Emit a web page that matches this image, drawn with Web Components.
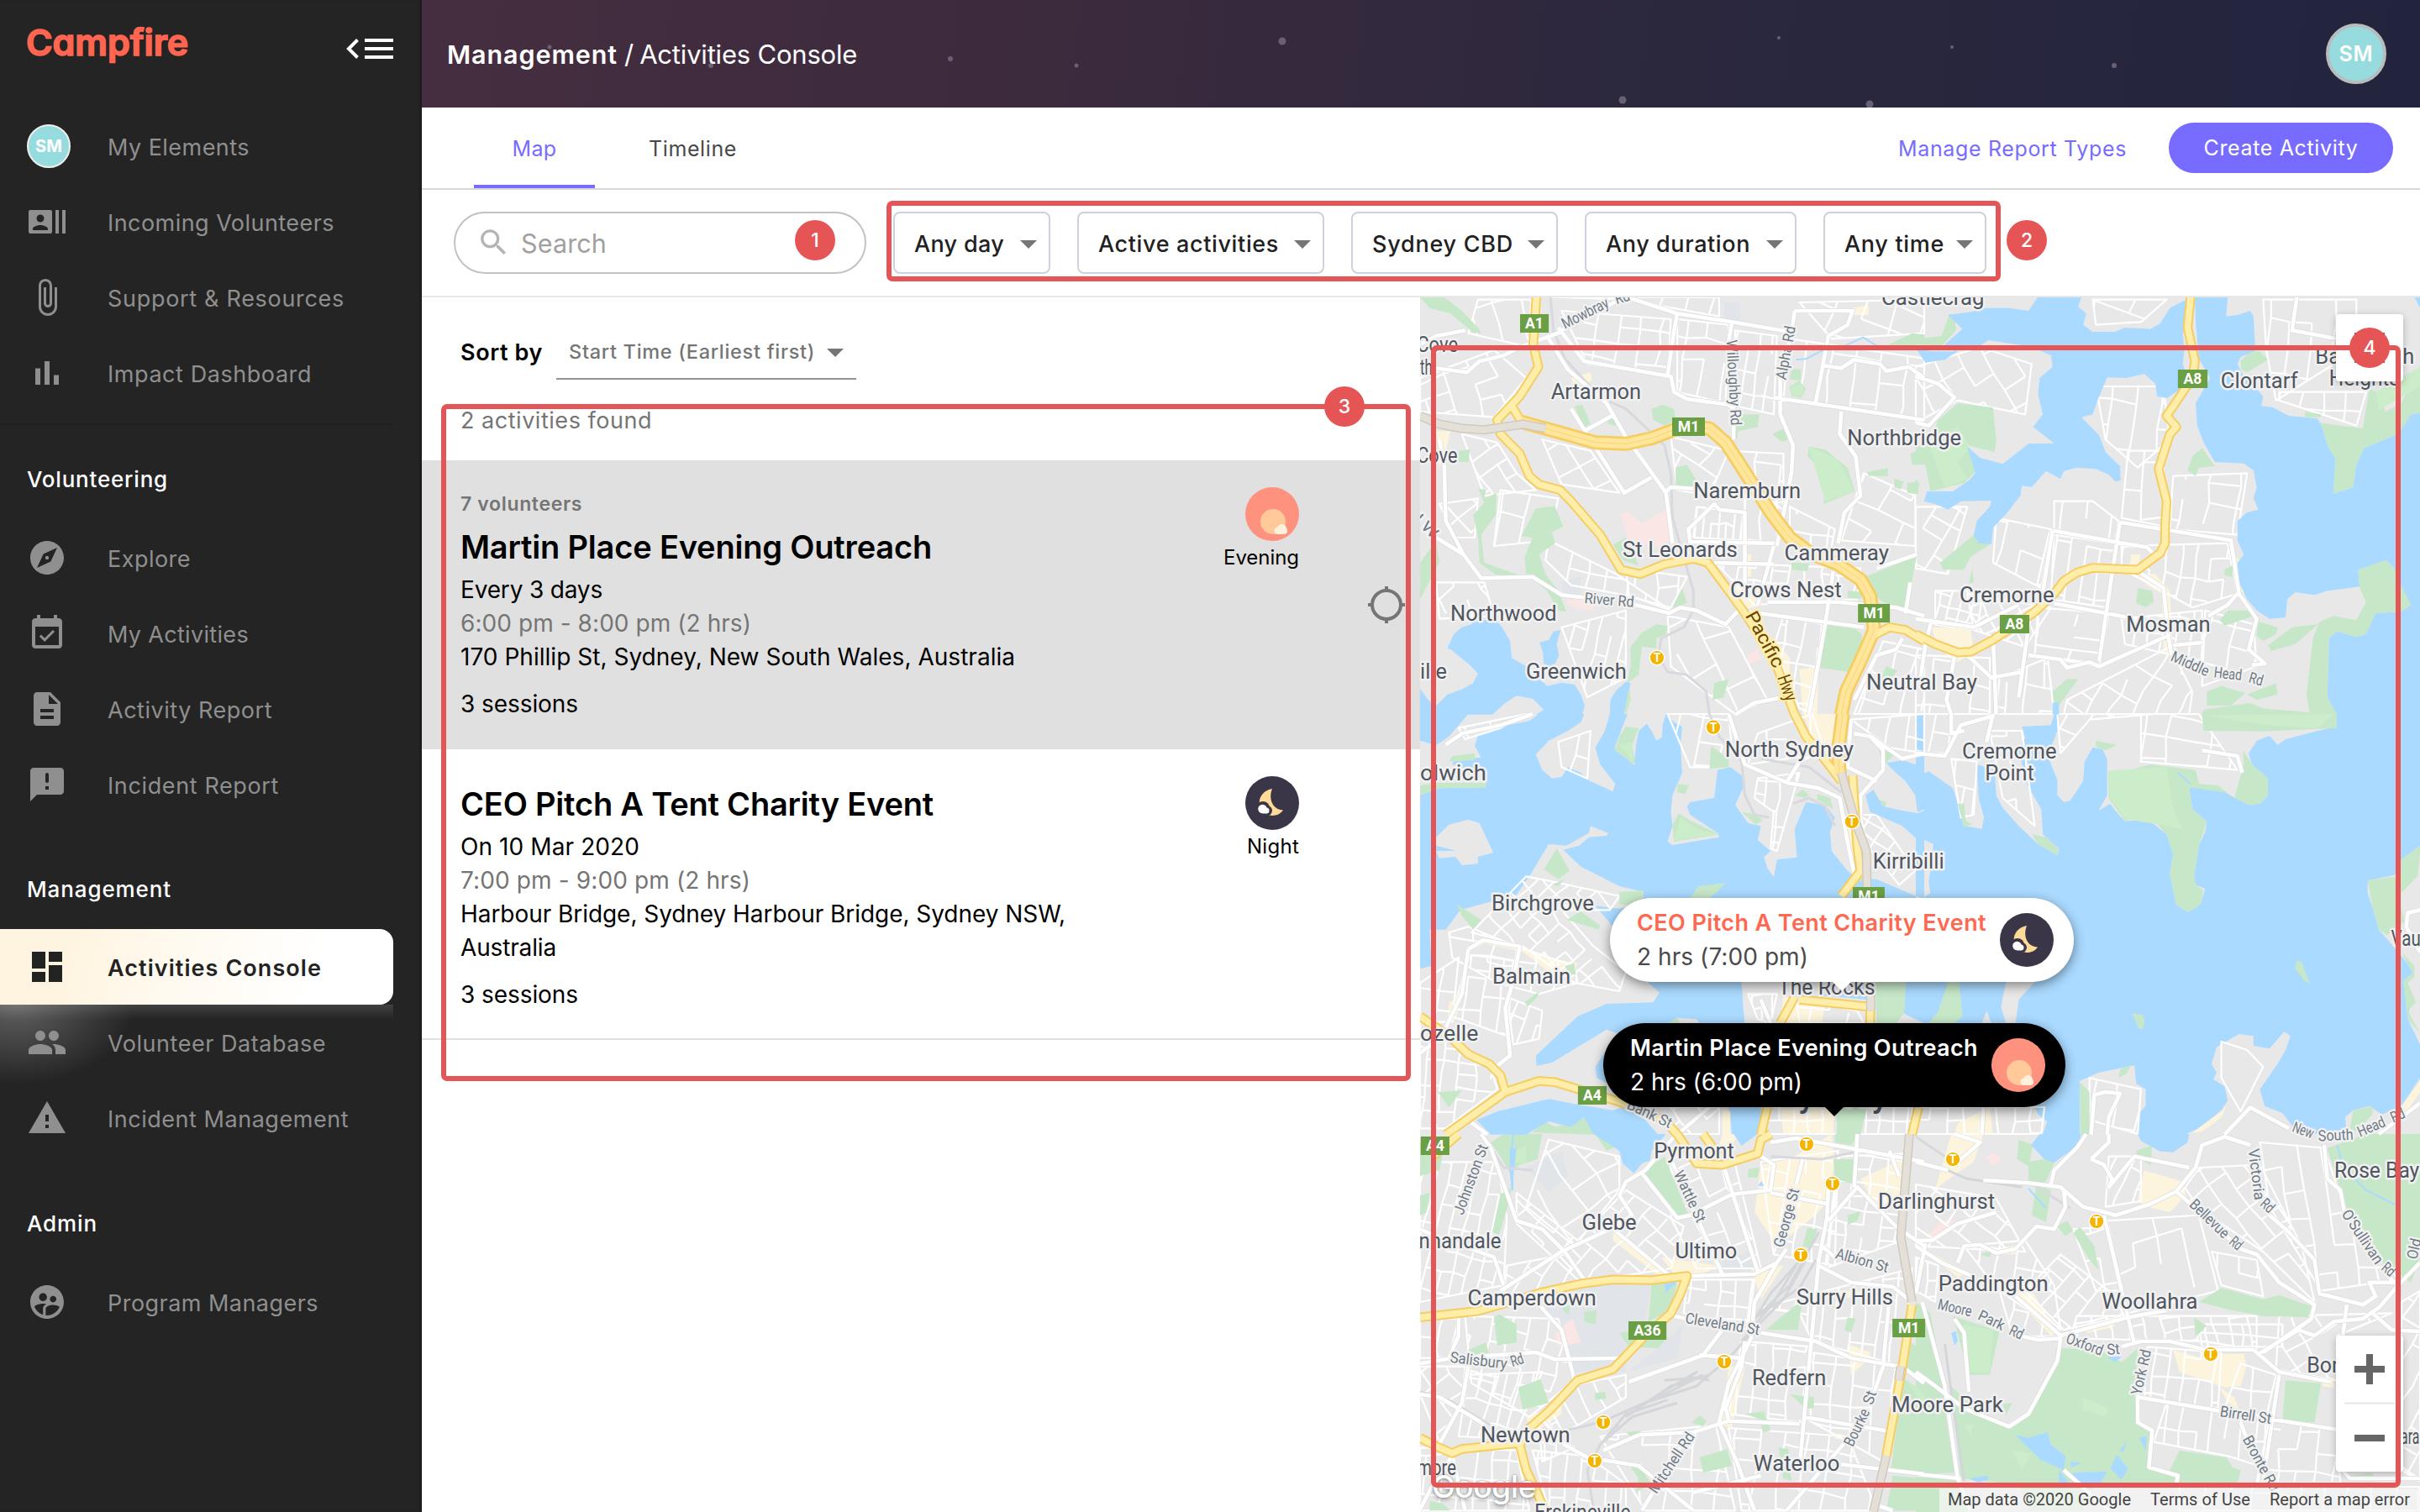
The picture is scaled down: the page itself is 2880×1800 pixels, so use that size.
<!DOCTYPE html>
<html lang="en">
<head>
<meta charset="utf-8">
<title>Campfire – Activities Console</title>
<style>
html,body{margin:0;padding:0}
body{width:2880px;height:1800px;overflow:hidden;background:#fff;font-family:Inter,"Liberation Sans",sans-serif;color:#000}
</style>
</head>
<body>
<campfire-app></campfire-app>
<script>
const define=(name,html,setup)=>customElements.define(name,class extends HTMLElement{
  connectedCallback(){
    if(this.shadowRoot)return;
    const r=this.attachShadow({mode:'open'});
    r.innerHTML=typeof html==='function'?html(this):html;
    if(setup)setup(this,r);
  }
});

/* Text run that spreads its letters over a set width */
define('fit-text','<style>:host{display:inline-block;white-space:nowrap;flex:none}</style><slot></slot>',(el)=>{
  queueMicrotask(()=>{
    const w=+el.getAttribute('w')+2,n=el.textContent.length;
    const now=el.getBoundingClientRect().width;
    if(now&&n)el.style.letterSpacing=((w-now)/n).toFixed(3)+'px';
    el.style.width=w+'px';
  });
});

/* ---------- icons ---------- */
const ICONS={
 actors:'M21 5v14h2V5h-2zm-4 14h2V5h-2v14zM14 5H2c-.55 0-1 .45-1 1v12c0 .55.45 1 1 1h12c.55 0 1-.45 1-1V6c0-.55-.45-1-1-1zM8 7.75c1.24 0 2.25 1.01 2.25 2.25S9.24 12.25 8 12.25 5.75 11.24 5.75 10 6.76 7.75 8 7.75zM12.5 17h-9v-.75c0-1.5 3-2.25 4.5-2.25s4.5.75 4.5 2.25V17z',
 clip:'M16.5 6v11.5c0 2.21-1.79 4-4 4s-4-1.79-4-4V5c0-1.38 1.12-2.5 2.5-2.5s2.5 1.12 2.5 2.5v10.5c0 .55-.45 1-1 1s-1-.45-1-1V6H10v9.5c0 1.38 1.12 2.5 2.5 2.5s2.5-1.12 2.5-2.5V5c0-2.21-1.79-4-4-4S7 2.79 7 5v12.5c0 3.04 2.46 5.5 5.5 5.5s5.5-2.46 5.5-5.5V6h-1.5z',
 bars:'M5 9.2h3V19H5zM10.5 5h3v14h-3zM16 13.2h3V19h-3z',
 explore:'M12 10.9c-.61 0-1.1.49-1.1 1.1s.49 1.1 1.1 1.1c.61 0 1.1-.49 1.1-1.1s-.49-1.1-1.1-1.1zM12 2C6.48 2 2 6.48 2 12s4.48 10 10 10 10-4.48 10-10S17.52 2 12 2zm2.19 12.19L6 18l3.81-8.19L18 6l-3.81 8.19z',
 event:'M19 3h-1V1h-2v2H8V1H6v2H5c-1.11 0-1.99.9-1.99 2L3 19c0 1.1.89 2 2 2h14c1.1 0 2-.9 2-2V5c0-1.1-.9-2-2-2zm0 16H5V8h14v11zM16.53 11.06L15.47 10l-4.88 4.88-2.12-2.12-1.06 1.06L10.59 17l5.94-5.94z',
 doc:'M14 2H6c-1.1 0-1.99.9-1.99 2L4 20c0 1.1.89 2 1.99 2H18c1.1 0 2-.9 2-2V8l-6-6zm2 16H8v-2h8v2zm0-4H8v-2h8v2zm-3-5V3.5L18.5 9H13z',
 announce:'M20 2H4c-1.1 0-1.99.9-1.99 2L2 22l4-4h14c1.1 0 2-.9 2-2V4c0-1.1-.9-2-2-2zm-7 8q0 1-1 1t-1-1V6q0-1 1-1t1 1zm0 5h-2v-2h2v2z',
 dash:'M3 13h8V3H3v10zm0 8h8v-6H3v6zm10 0h8V11h-8v10zm0-18v6h8V3h-8z',
 people:'M16 11c1.66 0 2.99-1.34 2.99-3S17.66 5 16 5c-1.66 0-3 1.34-3 3s1.34 3 3 3zm-8 0c1.66 0 2.99-1.34 2.99-3S9.66 5 8 5C6.34 5 5 6.34 5 8s1.34 3 3 3zm0 2c-2.33 0-7 1.17-7 3.5V19h14v-2.5c0-2.33-4.67-3.5-7-3.5zm8 0c-.29 0-.62.02-.97.05 1.16.84 1.97 1.97 1.97 3.45V19h6v-2.5c0-2.33-4.67-3.5-7-3.5z',
 warn:'M1 21h22L12 2 1 21zm12-3h-2v-2h2v2zm0-4h-2v-4h2v4z',
 managers:'M11.99 2c-5.52 0-10 4.48-10 10s4.48 10 10 10 10-4.48 10-10-4.48-10-10-10zm3.61 6.34c1.07 0 1.93.86 1.93 1.93 0 1.07-.86 1.93-1.93 1.93-1.07 0-1.93-.86-1.93-1.93-.01-1.07.86-1.93 1.93-1.93zm-6-1.58c1.3 0 2.36 1.06 2.36 2.36 0 1.3-1.06 2.36-2.36 2.36s-2.36-1.06-2.36-2.36c0-1.31 1.05-2.36 2.36-2.36zm0 9.13v3.75c-2.4-.75-4.3-2.6-5.14-4.96 1.05-1.12 3.67-1.69 5.14-1.69.53 0 1.2.08 1.9.22-1.64.87-1.9 2.02-1.9 2.68zM11.99 20c-.27 0-.53-.01-.79-.04v-4.07c0-1.42 2.94-2.13 4.4-2.13 1.07 0 2.92.39 3.84 1.15-1.17 2.97-4.06 5.09-7.45 5.09z',
 search:'M15.5 14h-.79l-.28-.27C15.41 12.59 16 11.11 16 9.5 16 5.91 13.09 3 9.5 3S3 5.91 3 9.5 5.91 16 9.5 16c1.61 0 3.09-.59 4.23-1.57l.27.28v.79l5 4.99L20.49 19l-4.99-5zm-6 0C7.01 14 5 11.99 5 9.5S7.01 5 9.5 5 14 7.01 14 9.5 11.99 14 9.5 14z'
};
define('mat-icon',el=>`<style>:host{display:block;flex:none}svg{display:block}</style><svg width="${el.getAttribute('size')||48}" height="${el.getAttribute('size')||48}" viewBox="0 0 24 24" fill="currentColor"><path d="${ICONS[el.getAttribute('name')]}"/></svg>`);

define('time-icon',el=>`<style>:host{display:block;flex:none;width:64px;height:64px}svg{display:block}</style>`+
 (el.getAttribute('kind')==='evening'
 ?`<svg width="64" height="64" viewBox="0 0 64 64"><circle cx="32" cy="32" r="32" fill="#ff927f"/><circle cx="33" cy="41" r="15" fill="#ffc99a"/><g fill="#fff0dc"><circle cx="38.500" cy="52" r="4"/><circle cx="43.500" cy="49.500" r="5.600"/><circle cx="46" cy="52" r="4"/><rect x="38" y="50" width="8.500" height="6"/></g></svg>`
 :`<svg width="64" height="64" viewBox="0 0 64 64"><circle cx="32" cy="32" r="32" fill="#3a3547"/><path d="M32 15C20 17 14 28 18 37C22 48 38 51 45 40.500C33 40 27 28 32 15Z" fill="#ffd998"/><g fill="#3a3547"><circle cx="21" cy="38" r="8"/><circle cx="26" cy="41" r="6"/></g><g fill="#fff"><circle cx="20.500" cy="39" r="5.300"/><circle cx="25" cy="41" r="3.500"/><rect x="20" y="39" width="5" height="5.400"/></g></svg>`));

define('user-avatar',el=>{const s=+el.getAttribute('size');return `<style>:host{display:flex;flex:none;box-sizing:border-box;width:${s}px;height:${s}px;border:${s>60?4:2}px solid ${s>60?'#b8bcbe':'#f0efec'};border-radius:50%;background:#96dcde;color:#fff;font-weight:${s>60?600:700};font-size:${s>60?25:20}px;align-items:center;justify-content:center}</style><fit-text w="${s>60?39:30}">SM</fit-text>`});

/* ---------- sidebar ---------- */
define('nav-item',`<style>
:host{display:flex;align-items:center;height:90px;width:468px;box-sizing:border-box;padding-left:32px;color:#8f8f8f;font-size:27px;line-height:40px;position:relative}
.i{width:96px;flex:none;display:flex}
.l{padding-top:3px}
:host([active]){background:linear-gradient(105deg,#fff4e0 0%,#fff4e0 18%,#fffaf0 45%,#fff 80%);color:#232323;font-weight:600;border-radius:0 16px 16px 0}
</style><div class="i"><slot name="icon"></slot></div><div class="l"><slot></slot></div>`);
define('nav-group',`<style>:host{display:block}h2{margin:0;box-sizing:border-box;padding-left:32px;font-size:26px;line-height:40px;font-weight:500;color:#fff}</style><h2><slot name="title"></slot></h2><slot></slot>`,(el,r)=>{
  const h=r.querySelector('h2');h.style.height=el.getAttribute('head')+'px';h.style.paddingTop=(el.getAttribute('head')/2-3.5)+'px';
  if(!el.hasAttribute('head'))h.style.display='none';
});
define('side-bar',`<style>
:host{display:block;width:502px;height:1800px;flex:none;background:#242424;box-shadow:inset -3px 0 3px -1px #1a1a1a}
.brand{display:flex;justify-content:space-between;box-sizing:border-box;height:129px;padding:24px 34px 0 31px}
.logo{color:#ff6550;font-size:43px;line-height:52px;font-weight:600;font-feature-settings:"cv11";-webkit-text-stroke:1.6px #ff6550;stroke-linejoin:round}
.brand svg{margin-top:20px}
.line{height:2px;width:468px;margin:15px 0 -17px;background:#202020}
.glow{height:100px;width:468px;margin-bottom:-100px;background:radial-gradient(ellipse 140px 95px at 20px 0,rgba(255,255,255,.28),transparent),linear-gradient(rgba(255,255,255,.13),rgba(255,255,255,0) 18px)}
</style>
<div class="brand"><fit-text class="logo" w="191">Campfire</fit-text>
<svg width="56" height="28" viewBox="0 0 56 28" fill="none" stroke="#fff" stroke-width="4"><path d="M13.500 3.500L3 14l10.500 10.500M22 4h34M22 14h34M22 24h34"/></svg></div>
<nav-group>
<nav-item><user-avatar slot="icon" size="52"></user-avatar><fit-text w="167">My Elements</fit-text></nav-item>
<nav-item><mat-icon slot="icon" name="actors"></mat-icon><fit-text w="268">Incoming Volunteers</fit-text></nav-item>
<nav-item><mat-icon slot="icon" name="clip"></mat-icon><fit-text w="280">Support &amp; Resources</fit-text></nav-item>
<nav-item><mat-icon slot="icon" name="bars"></mat-icon><fit-text w="241">Impact Dashboard</fit-text></nav-item>
</nav-group>
<div class="line"></div>
<nav-group head="130"><fit-text slot="title" w="166">Volunteering</fit-text>
<nav-item><mat-icon slot="icon" name="explore"></mat-icon><fit-text w="97">Explore</fit-text></nav-item>
<nav-item><mat-icon slot="icon" name="event"></mat-icon><fit-text w="166">My Activities</fit-text></nav-item>
<nav-item><mat-icon slot="icon" name="doc"></mat-icon><fit-text w="194">Activity Report</fit-text></nav-item>
<nav-item><mat-icon slot="icon" name="announce"></mat-icon><fit-text w="202">Incident Report</fit-text></nav-item>
</nav-group>
<nav-group head="127"><fit-text slot="title" w="170">Management</fit-text>
<nav-item active><mat-icon slot="icon" name="dash"></mat-icon><fit-text w="253">Activities Console</fit-text></nav-item>
<div class="glow"></div>
<nav-item><mat-icon slot="icon" name="people"></mat-icon><fit-text w="258">Volunteer Database</fit-text></nav-item>
<nav-item><mat-icon slot="icon" name="warn"></mat-icon><fit-text w="285">Incident Management</fit-text></nav-item>
</nav-group>
<nav-group head="129"><fit-text slot="title" w="82">Admin</fit-text>
<nav-item><mat-icon slot="icon" name="managers"></mat-icon><fit-text w="249">Program Managers</fit-text></nav-item>
</nav-group>`);

/* ---------- header and tabs ---------- */
const STARS=[[152,56,2.5],[344,78,3],[629,70,3],[779,78,2.5],[1024,49,4.5],[1615,45,2],[1821,56,2],[2014,78,3],[1429,119,4.5],[1723,124,4.5]];
define('top-header',`<style>
:host{display:grid;height:128px;background:linear-gradient(97deg,#452e40 0%,#3c2a3d 32%,#2b283e 62%,#22243e 100%);color:#fff}
svg,.row{grid-area:1/1}
.row{display:flex;align-items:center;padding:0 40px 0 30px;font-size:31px;line-height:40px}
.x{padding-top:1px;display:flex}
b{font-weight:600;font-size:30.500px}.sep{padding:0 7px 0 8px}
user-avatar{margin-left:auto}
</style><svg width="2378" height="128" fill="#6a6073">${STARS.map(s=>`<circle cx="${s[0]}" cy="${s[1]}" r="${s[2]}"/>`).join('')}</svg>
<div class="row"><div class="x"><b><fit-text w="201">Management</fit-text></b><span class="sep">/</span><fit-text w="257">Activities Console</fit-text></div><user-avatar size="72"></user-avatar></div>`);

define('tab-bar',`<style>
:host{display:flex;box-sizing:border-box;height:98px;border-bottom:2px solid #d8d8d8;align-items:stretch;padding:0 32px 0 62px;font-size:25px;line-height:40px;color:#484848}
.t{box-sizing:border-box;height:96px;padding:29px 0 22px;text-align:center}
.on{width:144px;border-bottom:4px solid #776cff;color:#776cff;padding-bottom:18px}
.t2{margin-left:64px}
.r{margin-left:auto;color:#776cff;padding-right:50px}
.btn{align-self:center;margin-top:0;background:#776cff;color:#fff;width:267px;height:60px;border-radius:30px;display:flex;align-items:center;justify-content:center}
</style><div class="t on"><fit-text w="51">Map</fit-text></div><div class="t t2"><fit-text w="103">Timeline</fit-text></div>
<div class="t r"><fit-text w="270">Manage Report Types</fit-text></div><div class="btn"><fit-text w="182">Create Activity</fit-text></div>`);

const CARET='<svg width="20" height="10"><path d="M0 0H20L10 10Z" fill="#757575"/></svg>';
define('filter-select',`<style>
:host{display:flex;box-sizing:border-box;flex:none;height:74px;align-items:center;justify-content:space-between;border:2px solid #cdd2da;border-radius:8px;background:#fff;color:#212121;font-size:27px;font-weight:500;line-height:40px;padding:3px 14px 0 23px}
svg{flex:none;margin-top:1px}
</style><slot></slot>${CARET}`,el=>{el.style.width=el.getAttribute('width')+'px'});
define('search-box',`<style>
:host{display:flex;box-sizing:border-box;flex:none;width:491px;height:74px;border:2px solid #c2c2c2;border-radius:37px;align-items:center;padding-left:25px;color:#a0a0a0;font-size:30.500px;line-height:40px}
mat-icon{margin-right:12px;color:#b4b4b4;margin-top:-1px}
fit-text{margin-top:1px}
</style><mat-icon name="search" size="41"></mat-icon><fit-text w="100">Search</fit-text>`);
define('filter-bar',`<style>
:host{display:flex;box-sizing:border-box;height:128px;border-bottom:2px solid #e8e8e8;align-items:center;padding:0 0 0 38px}
filter-select{margin-left:32px}
</style><search-box></search-box>
<filter-select width="187"><fit-text w="105">Any day</fit-text></filter-select>
<filter-select width="294"><fit-text w="213">Active activities</fit-text></filter-select>
<filter-select width="246"><fit-text w="166">Sydney CBD</fit-text></filter-select>
<filter-select width="252"><fit-text w="170">Any duration</fit-text></filter-select>
<filter-select width="194"><fit-text w="117">Any time</fit-text></filter-select>`);

/* ---------- activity list ---------- */
define('activity-card',`<style>
:host{display:flex;box-sizing:border-box;padding:0 0 32px 46px;font-size:28px;line-height:40px;position:relative}
:host([selected]){background:#e0e0e0;padding-bottom:34px}
:host(:not([selected])){border-bottom:2px solid #e0e0e0}
.l{width:760px;display:flex;flex-direction:column;align-items:flex-start;padding-top:34px}
:host([selected]) .l{padding-top:32px}
.r{width:238px;padding-top:32px;display:flex;flex-direction:column;align-items:flex-end;font-size:24px}
.g{margin-left:auto;padding-right:17px;align-self:center;padding-top:34px}
::slotted([slot=count]){font-size:23px;font-weight:600;color:#757575}
::slotted([slot=title]){font-size:38px;font-weight:600;line-height:62px}
::slotted([slot=time]){color:#757575}
::slotted([slot=sessions]){margin-top:16px}
</style><div class="l"><slot name="count"></slot><slot name="title"></slot><slot name="when"></slot><slot name="time"></slot><slot name="place"></slot><slot name="sessions"></slot></div>
<div class="r"><slot name="icon"></slot><slot name="period"></slot></div><div class="g"><slot name="locate"></slot></div>`);
define('locate-icon','<style>:host{display:block}svg{display:block}</style><svg width="46" height="46" fill="none" stroke="#757575" stroke-width="4"><circle cx="23" cy="23" r="17"/><path d="M23 1v6M23 39v6M1 23h6M39 23h6"/></svg>');
define('activity-list',`<style>
:host{display:block;width:1188px;flex:none;background:#fff}
.sort{display:flex;margin-top:32px;height:66px;padding-left:46px;align-items:stretch;font-size:27px;line-height:67px;font-weight:600}
.sel{display:flex;box-sizing:border-box;width:357px;height:66px;margin-left:16px;padding-left:15px;border-bottom:2px solid #949494;color:#757575;font-size:23.500px;font-weight:500;align-items:center;line-height:66px}
.sel fit-text{padding-top:2px}
.sel svg{margin:4px 0 0 14px}
.n{padding-left:46px;height:96px;line-height:97px;font-size:27px;color:#757575}
</style>
<div class="sort"><fit-text w="96">Sort by</fit-text><div class="sel"><fit-text w="291">Start Time (Earliest first)</fit-text>${CARET}</div></div>
<div class="n"><fit-text w="226">2 activities found</fit-text></div>
<activity-card selected><fit-text slot="count" w="143">7 volunteers</fit-text><fit-text slot="title" w="559">Martin Place Evening Outreach</fit-text><fit-text slot="when" w="167">Every 3 days</fit-text><fit-text slot="time" w="344">6:00 pm - 8:00 pm (2 hrs)</fit-text><fit-text slot="place" w="658">170 Phillip St, Sydney, New South Wales, Australia</fit-text><fit-text slot="sessions" w="138">3 sessions</fit-text><time-icon slot="icon" kind="evening"></time-icon><fit-text slot="period" w="88">Evening</fit-text><locate-icon slot="locate"></locate-icon></activity-card>
<activity-card><fit-text slot="title" w="561">CEO Pitch A Tent Charity Event</fit-text><fit-text slot="when" w="211">On 10 Mar 2020</fit-text><fit-text slot="time" w="343">7:00 pm - 9:00 pm (2 hrs)</fit-text><fit-text slot="place" w="718">Harbour Bridge, Sydney Harbour Bridge, Sydney NSW,</fit-text><fit-text slot="place" w="112">Australia</fit-text><fit-text slot="sessions" w="138">3 sessions</fit-text><time-icon slot="icon" kind="night"></time-icon><fit-text slot="period" w="60">Night</fit-text></activity-card>`);

/* ---------- map ---------- */
/* Sheets: a = north-west, b = north-east, c = mid-west, d = mid-east, e = south-west, f = south-east */
const SHEET={a:[0,0],b:[1542,0],c:[0,1500],d:[1542,1500],e:[0,3000],f:[1542,3000]};
const X=(t,u)=>+(1690+(u+SHEET[t][0])*.38265).toFixed(1),Y=(t,v)=>+(350+(v+SHEET[t][1])/3).toFixed(1);
const pts=(t,s)=>s.trim().split(/\s+/).map(p=>{const[a,b]=p.split(',').map(Number);return[X(t,a),Y(t,b)]});
const line=(t,s)=>'M'+pts(t,s).map(p=>p.join(' ')).join('L');
const many=(o,close)=>Object.entries(o).map(([t,l])=>l.map(s=>line(t,s)+(close?'Z':'')).join('')).join('');

const SEA={
c:['0,0 1568,0 1568,1500 560,1500 540,1400 0,1400'],d:['0,0 1568,0 1568,1500 0,1500']};
const LAND={
c:['150,0 370,0 340,25 250,45 180,75 170,115 190,155 105,165 100,180 205,215 205,262 60,265 0,290 0,95 50,112 90,80',
'510,0 500,30 460,60 400,95 360,145 380,200 410,230 440,225 460,190 500,210 520,235 600,277 607,250 560,180 545,120 575,60 590,0',
'645,0 625,60 605,120 665,182 672,110 680,60 705,35 720,60 735,95 752,85 755,35 765,0',
'765,0 790,30 815,45 810,110 815,210 785,290 780,350 785,400 770,455 785,468 930,440 925,425 840,360 830,330 840,315 915,300 925,200 965,190 1000,220 1010,250 980,325 1020,390 1060,400 1050,450 1090,490 1070,510 1080,550 1100,583 1110,520 1172,512 1165,410 1200,315 1260,325 1290,370 1275,420 1280,490 1330,560 1360,590 1420,590 1520,640 1568,660 1568,0',
'0,910 35,900 30,770 80,770 125,700 300,645 345,570 400,465 455,470 525,425 530,400 585,425 580,435 525,440 495,470 445,485 500,545 560,580 620,615 695,635 692,680 620,695 545,685 600,760 650,860 700,950 745,995 725,1030 580,1035 490,1080 360,1220 362,1257 410,1245 580,1127 612,1140 545,1260 550,1300 620,1340 620,1500 0,1500',
'750,1130 800,1085 860,1090 900,1150 960,1400 970,1500 600,1500 600,1330',
'1000,957 1420,957 1510,957 1505,1070 1568,1105 1568,1500 1060,1500 1060,1400 1010,1110 1005,1050',
'50,440 90,395 150,377 185,390 228,495 180,510 180,535 130,540 110,510 60,515 50,490 110,488 50,470'],
d:['0,0 430,0 420,40 330,45 340,85 320,130 345,250 390,340 395,430 445,480 440,505 380,465 320,400 270,335 250,290 245,200 190,180 195,300 212,370 205,410 150,400 130,320 115,265 40,205 0,225',
'440,0 1308,0 1308,45 1250,60 1150,90 1125,110 1100,78 1060,95 1035,140 1045,180 1095,230 1095,290 1070,320 1035,325 960,280 940,265 850,262 860,340 905,385 900,420 880,470 865,580 870,610 900,625 885,680 845,708 810,680 790,570 800,500 780,430 720,375 650,383 620,345 605,320 568,345 595,290 595,160 580,125 550,120 525,170 520,240 480,310 460,315 440,290 440,235 410,150 440,60',
'1568,470 1510,520 1490,575 1405,595 1405,640 1420,690 1440,770 1500,850 1550,920 1515,955 1540,1020 1530,1090 1568,1180',
'0,435 55,465 40,600 45,640 15,660 0,660','280,957 370,957 320,1020 310,1104 280,1104 265,1045','205,1104 220,1060 235,1104',
'0,1400 370,1404 380,1430 408,1455 395,1500 0,1500','510,1310 570,1280 680,1255 685,1320 715,1340 715,1400 695,1425 690,1500 510,1500',
'840,1500 880,1480 950,1415 970,1380 960,1330 925,1305 935,1280 920,1250 935,1190 1005,1143 1050,1150 1050,1185 1100,1195 1145,1135 1165,1150 1150,1200 1125,1250 1070,1340 1085,1400 1140,1425 1190,1500',
'1200,1500 1340,1495 1335,1440 1360,1415 1410,1400 1450,1430 1510,1400 1568,1300 1568,1500']};
const WATER={
a:['85,1265 105,1215 130,1190 160,1180 170,1150 200,1165 235,1165 255,1190 280,1240 285,1300 330,1330 395,1400 440,1388 480,1395 500,1430 512,1470 505,1502 360,1502 385,1485 350,1445 300,1435 265,1460 225,1502 0,1502 0,1410 25,1450 50,1470 85,1430 130,1412 165,1390 180,1355 150,1320 95,1270',
'372,1245 400,1235 415,1205 437,1200 425,1250 432,1290 420,1320 400,1330 385,1320 382,1280','590,1502 592,1450 610,1415 640,1385 655,1390 645,1430 635,1502','1540,195 1568,200 1568,222'],
b:['100,75 180,62 200,50 290,50 350,60 380,10 515,10 505,45 530,70 520,110 550,135 620,135 650,120 730,125 760,105 790,50 840,20 840,120 830,140 835,200 830,250 845,300 830,335 780,372 750,365 745,320 710,285 655,300 595,298 565,380 550,430 515,440 570,505 590,565 635,615 637,665 620,670 600,645 560,625 500,620 460,632 450,660 405,632 360,690 330,685 325,720 285,780 240,835 235,893 195,890 180,860 190,810 230,760 235,738 140,740 100,770 60,750 25,740 35,705 115,705 165,665 185,640 160,545 200,585 270,607 350,535 430,533 365,475 395,430 380,360 385,300 425,260 420,220 365,190 225,165 200,185 120,205 90,180 120,150 145,125',
'0,195 50,205 130,205 90,235 30,245','868,12 970,10 965,80 1000,75 1040,60 1050,80 1055,180 1060,200 1010,225 1000,250 1015,285 1045,320 1080,365 1075,400 1110,405 1160,435 1250,445 1265,480 1280,540 1305,590 1298,714 1360,690 1370,610 1395,550 1500,500 1540,430 1568,425 1568,1502 1310,1502 1280,1440 1285,1230 1310,1205 1370,1225 1400,1215 1430,1140 1510,1135 1540,1110 1500,1020 1490,985 1462,950 1375,985 1380,1045 1280,1060 1240,1075 1180,1065 1155,1090 1150,1155 1100,1160 1060,1130 1030,1090 1005,1030 1000,960 1020,930 1000,880 1000,810 1030,780 1065,770 1050,730 1060,690 1050,630 1020,605 930,600 895,530 875,470 870,390 915,300 880,230 870,100','1550,10 1568,10 1568,50','425,1460 445,1458 445,1502 425,1502'],
c:['175,1450 240,1420 400,1375 490,1395 600,1415 640,1400 700,1450 740,1502 540,1502 510,1440 470,1475 400,1455 330,1502 220,1502',
'1568,190 1500,165 1450,175 1475,205 1510,240 1540,290 1547,350 1568,340','1385,290 1410,270 1440,330 1500,345 1547,355 1568,345 1568,470 1500,400 1440,370 1400,350','1230,1005 1300,1010 1390,1020 1390,960 1310,990','0,0 40,0 55,60 0,70'],
e:['540,0 765,0 720,60 715,95 690,105 665,140 630,105 620,60 580,30','975,0 1050,0 1000,42','280,50 300,50 285,210 278,120','760,535 800,528 765,567','1050,185 1062,168 1070,186'],
f:['385,0 515,0 500,50 455,80 430,103 400,90 358,40','690,0 850,0 845,30 800,65 760,62 700,25','310,1075 350,1085 410,1065 420,1110 465,1150 460,1200 390,1165 340,1110','490,1210 595,1205 575,1245 485,1250','625,1145 660,1195 640,1235 605,1195','655,1095 635,1130 645,1137','695,1085 718,1078 715,1132','595,795 640,795 620,815','165,1230 225,1220 225,1235 195,1245','480,1170 515,1175 485,1190','110,710 125,705 130,740 120,755','445,1200 480,1250 445,1250']};
const PARK={
a:['0,12 75,12 130,60 180,120 190,140 165,138 95,70 30,50','180,695 205,700 200,730 238,710 235,790 190,860 200,960 310,1005 240,1005 185,960 180,870 165,790 200,745','360,765 420,758 445,830 410,850 420,890 370,930 390,1000 430,1060 455,1135 430,1130 395,1060 330,1000 325,940 350,870 315,865','0,960 50,880 60,960 0,1090','480,400 505,395 530,465 510,475','580,440 605,435 610,470 585,465','720,410 755,395 790,410 795,450 760,470 725,450','795,620 830,610 860,665 850,690 795,690','980,430 1055,430 1050,475 990,490 985,520 970,515 975,470','1095,500 1130,480 1145,520 1125,528','1210,545 1260,555 1330,620 1352,705 1255,750 1260,690 1240,620 1205,580','1155,270 1185,268 1185,310 1150,305','1150,330 1180,310 1200,340 1185,370 1155,365','1390,635 1455,622 1455,650 1395,650','1475,660 1505,670 1495,698 1475,690','1515,675 1550,670 1550,715 1515,710','1525,570 1568,550 1568,610 1530,610','1440,190 1530,140 1568,145 1568,180','1385,1010 1545,935 1510,1140 1440,1100 1395,1060','1155,960 1210,962 1205,990 1155,985','1330,1060 1380,1065 1370,1090 1330,1085','1260,1185 1340,1185 1375,1215 1365,1355 1245,1335','1450,1330 1485,1345 1440,1410 1430,1380','600,895 640,870 680,970 630,950','815,1050 830,1105 785,1120','735,1180 770,1185 765,1215 735,1230 735,1265 690,1260 680,1360 650,1385 655,1450 640,1502 632,1450 655,1330 655,1260 690,1210','915,1390 960,1375 945,1440 910,1450','120,560 155,555 150,600 120,600'],
b:['0,160 80,150 105,70 90,60 120,80 125,130 80,185 0,180','65,455 130,390 240,405 250,520 245,565 160,540 185,635 150,675 45,705 30,610 0,600 0,545 60,535','0,660 12,680 0,710','180,860 230,895 170,940 150,985 85,985 75,960','175,980 180,1030 165,1035','890,550 930,615 880,620 870,650 845,630 860,580','1010,240 1040,205 1070,205 1095,235 1030,280 1012,270','1210,420 1260,430 1260,440 1210,440','1255,460 1390,480 1410,340 1440,350 1460,420 1510,390 1568,255 1568,425 1540,430 1500,500 1395,550 1370,610 1360,690 1298,714 1305,590 1280,540 1265,480','690,1050 735,1060 740,1100 715,1118 685,1105','960,985 985,970 985,1010 960,1005','945,1165 970,1130 1050,1130 1050,1150 1000,1170 960,1185','1065,1170 1125,1190 1120,1215 1080,1240 1060,1220','1095,1255 1170,1190 1250,1180 1180,1250 1105,1275','1375,985 1462,950 1500,1000 1540,1110 1510,1135 1430,1140 1400,1215 1370,1225 1310,1205 1285,1230 1280,1440 1310,1502 1225,1502 1215,1430 1235,1230 1255,1170 1300,1150 1370,1165 1400,1100 1380,1050','425,1420 470,1375 505,1375 445,1470 430,1465','905,1420 950,1400 1025,1425 980,1470 905,1470','1030,1430 1120,1390 1125,1430 1060,1450','895,1485 1040,1460 1080,1480 1300,1502 890,1502'],
c:['100,150 170,140 170,165 90,170','0,255 60,245 205,245 205,262 60,265 0,290','640,45 680,50 660,110 670,182 605,130 620,80','800,250 835,255 825,285 800,280','785,395 805,355 840,380 930,430 790,455','905,115 960,160 960,190 900,195','1415,80 1450,130 1480,140 1440,185','1165,290 1190,270 1210,290 1195,300','1235,285 1275,300 1285,340 1235,305','1000,350 1050,360 1065,380 1045,395','1400,295 1450,315 1445,345 1400,305','385,555 425,480 465,560 430,590','410,610 450,590 430,615','115,680 190,735 165,770 130,720','865,615 950,603 920,640 900,657 840,657','620,635 695,630 690,680 620,680','455,735 500,705 560,755 555,770 500,750','450,900 480,890 485,930 465,930','325,1030 370,990 365,1010 335,1045','1415,957 1510,957 1505,1070 1480,1104 1420,1104','775,1104 800,1082 805,1104','55,1350 130,1345 90,1405','350,1495 390,1455 420,1475 520,1440 540,1502','1295,1404 1390,1404 1370,1502 1295,1502','1355,590 1385,585 1375,600','1345,460 1360,455 1355,490'],
d:['890,0 1308,0 1308,50 1080,62 895,60','560,95 625,110 590,130 560,118','598,203 670,215 680,195 730,180 870,200 880,250 940,255 990,300 1020,180 1018,130 1045,180 1095,230 1095,290 1070,320 1035,325 960,280 850,262 860,340 905,385 880,470 865,580 870,610 895,630 885,680 845,708 810,680 790,570 800,500 780,430 720,355 650,383 600,300','130,320 150,320 155,380 175,395 150,405','362,430 405,440 443,480 440,505 380,465','1568,470 1510,520 1495,580 1405,595 1420,690 1440,770 1465,790 1520,740 1500,650 1560,580 1568,500','1185,880 1200,885 1225,962 1210,955 1180,910','672,1068 705,1075 712,1100 705,1125 693,1122','100,957 135,957 145,1080 120,1104 40,1104 70,1060','1510,850 1550,900 1550,940 1530,960 1555,1030 1530,1060 1568,1140 1530,1090 1515,955 1545,925','635,1270 670,1253 655,1285 630,1300','510,1315 540,1350 540,1502 512,1502','1360,1415 1420,1400 1420,1430 1370,1490 1350,1480'],
e:['220,30 260,0 380,0 365,90 310,110 280,140 250,80','250,215 285,190 270,270 245,360 225,350','685,140 760,80 835,290 800,300','545,0 580,60 620,40','1020,125 1055,120 1050,155 1020,155','1290,0 1370,0 1340,40 1290,30','1285,90 1360,90 1350,180 1290,160','0,220 30,210 20,280 0,290','1330,290 1370,275 1360,310 1330,325','1205,335 1235,340 1215,410 1190,400','720,535 800,535 780,630 710,670','1075,700 1190,590 1175,700','1330,655 1355,660 1340,710 1320,700','230,650 250,645 300,680 300,745 240,755','150,770 205,745 215,790 170,800','510,635 550,630 545,680 510,670','440,620 470,610 460,645','620,710 740,690 760,740 740,765 650,760','305,905 375,875 400,960 320,985','545,925 575,920 580,945 545,950','1510,730 1568,780 1568,900 1505,830','1500,870 1568,920 1568,1205 1465,1195','1150,930 1225,940 1225,980 1200,980','1010,1000 1070,990 1090,1060 1065,1065 1060,1020','870,1155 955,1125 970,1185 880,1210','845,1030 870,1005 890,1025 880,1045','650,1180 690,1200 720,1250 670,1280 680,1230','1115,1120 1145,1125 1155,1240 1130,1230','1470,1220 1568,1230 1568,1345 1450,1345','30,1310 70,1320 95,1345 30,1345','0,30 70,80 60,130 0,150','640,1065 690,1060 660,1085'],
f:['350,100 440,80 400,180 350,175','320,20 365,40 350,115 315,90','685,60 735,40 730,110 690,85','375,180 420,200 405,315 360,290','440,330 470,310 490,345 465,365','490,355 510,330 555,400 568,485 540,450','880,600 950,550 1080,590 1130,575 1230,615 1220,655 1080,650 985,630','865,655 905,685 870,725','200,430 240,415 230,440','1280,50 1400,0 1568,0 1568,440 1540,530 1430,440 1380,380 1330,240','115,650 260,705 230,860 165,860','450,765 570,770 640,815 690,765 680,930 690,1030 735,1060 725,1190 815,1215 815,1250 300,1250 140,1230 110,900 165,960 285,1050 350,1000 445,800','0,600 45,640 80,850 90,980 120,1210 0,1215','270,965 300,960 280,1005','1150,880 1260,890 1240,1030 1140,1025','790,1200 820,1130 965,1155 985,1190 1010,1200 1000,1250 810,1250','0,1220 130,1230 180,1350 0,1350','320,1250 560,1250 520,1345 350,1345','1350,1220 1420,1210 1430,1240 1360,1240']};
const LAWN={
a:['1210,545 1300,590 1350,705 1260,740','1155,330 1190,320 1195,360 1160,365'],
b:['45,545 170,545 130,600 160,660 90,690 60,600','130,470 165,540 60,530','1430,350 1568,260 1568,330 1440,415'],
c:['790,450 810,370 860,410 925,430','620,110 660,100 662,170'],
d:['598,203 780,190 800,340 830,410 780,400 650,375 605,300','900,5 1300,0 1250,50 1090,40'],
e:['290,60 330,45 330,105 290,100','1515,880 1568,930 1568,980'],
f:['145,680 240,700 230,850 170,850','300,1130 360,1140 330,1200','520,940 600,980 590,1010 520,985','150,1040 180,1035 170,1075']};
const SHOPS={
a:['470,300 530,280 535,310 480,330','960,1050 1060,1040 1065,1110 1000,1130','1010,930 1030,930 1030,1010 1010,1010','1340,50 1395,40 1395,75 1340,75','50,490 95,490 80,560 60,620 55,540','1180,1340 1240,1330 1235,1502 1190,1502','1100,1230 1150,1300 1150,1400 1110,1350'],
b:['670,930 700,930 690,985 665,975','690,1000 745,1000 790,1060 800,1290 770,1280 765,1070 720,1040','50,1190 170,1190 180,1280 120,1320 60,1240','1430,1020 1460,1025 1430,1080 1410,1075','985,920 1010,960 1040,1090 1110,1150 1010,1060'],
c:['1190,0 1300,0 1290,180 1230,110','150,830 240,800 320,830 400,870 490,890 480,920 400,920 320,850 200,820 150,850','90,1030 130,1010 110,1090 85,1100','1130,1010 1260,1030 1250,1104 1120,1104','1120,1404 1290,1404 1285,1502 1130,1502','940,1410 965,1420 965,1502 940,1502','1330,370 1360,380 1345,560 1330,450'],
d:['130,1460 230,1404 240,1502 120,1502','0,1404 15,1404 0,1500','860,1495 950,1420 965,1400 950,1440 890,1492','1510,1400 1568,1310 1568,1350 1520,1430'],
e:['1060,110 1150,90 1280,0 1290,110 1260,250 1230,290 1130,380 1110,400 1040,280','1370,160 1500,90 1490,250 1420,260','750,440 930,470 880,500 790,500','600,340 780,500 740,505 600,380','1030,480 1130,470 1060,590','1250,560 1450,560 1440,590 1260,580','1330,750 1400,780 1400,800 1340,860','960,830 1010,830 970,1050 940,1040 945,960','330,1010 440,960 440,1000 350,1070','1290,1070 1310,1070 1310,1090 1290,1090','940,0 990,0 970,40 930,40'],
f:['110,0 210,0 180,100 90,170 60,200','710,130 830,170 840,220 790,280 720,260 690,240 700,180','800,770 890,800 950,785 1020,785 1028,830 1010,900 960,905 820,850','945,905 990,940 1005,985 970,960','290,560 350,540 440,710 420,720','520,690 620,655 615,690 530,710','240,410 320,395 310,430 250,430','0,360 40,420 170,500 130,510 60,450','1260,870 1300,870 1300,905 1265,900']};
const HOSP={a:['622,785 645,778 690,820 765,770 780,880 740,905 645,880 640,840','455,1090 540,1085 540,1130 500,1125 460,1110','1018,1290 1050,1265 1062,1305 1025,1322'],e:['420,710 440,705 440,690 475,660 500,745 430,760'],f:['30,375 80,310 120,305 100,350 40,378','220,80 245,65 265,95 235,115']};
const CAMPUS={a:['440,1030 500,1010 500,1075 445,1070','945,30 995,30 995,95 945,90'],e:['390,620 510,540 720,530 700,670 650,720 640,850 480,850 440,700','940,450 1030,420 1060,480 940,500','330,120 440,60 460,150 400,210','650,850 820,680 800,800'],f:['0,880 60,870 80,930 70,960']};

/* Local street grids: outline, angle, block width, block depth */
const GRIDS=[
['a','0,300 230,200 330,300 230,440 0,420',-20,30,22],['a','180,20 345,20 340,190 150,140',-15,30,24],['a','440,60 780,90 770,290 520,250',8,26,20],['a','800,90 960,110 950,390 800,350',8,24,26],['a','980,130 1110,150 1100,430 980,400',8,14,26],['a','410,10 930,12 930,80 640,20',8,30,24],['a','1150,160 1568,230 1568,450 1130,370',8,30,26],['a','1180,30 1568,20 1568,140 1280,160',20,34,30],
['a','130,500 240,530 300,640 360,700 200,720',-30,26,20],['a','380,520 530,560 620,710 440,680',-32,40,34],['a','780,510 960,560 900,720 800,700',35,26,18],['a','860,760 1010,780 1000,880 850,870',5,9,34],['a','1010,720 1110,750 1110,890 1010,880',5,22,26],['a','1150,760 1290,840 1270,960 1150,860',5,20,24],['a','920,960 1370,980 1360,1090 1040,1110',5,20,15],['a','950,560 1130,570 1130,770 1060,720',5,28,22],
['a','440,1190 640,1130 640,1370 520,1440',15,15,26],['a','50,1030 200,1030 230,1150 60,1160',-35,26,20],['a','60,750 180,730 170,870 110,870',-40,26,22],['a','400,880 610,1000 780,1130 660,1080 470,1040 390,950',10,24,26],['a','250,700 430,730 400,880 230,900',12,32,34],['a','770,1150 960,1190 1080,1450 980,1500 780,1330',-25,36,32],['a','1130,1150 1250,1180 1220,1500 1180,1480 1100,1260',10,20,22],['a','1380,640 1540,720 1540,900 1310,880',25,34,26],['a','1440,1240 1568,1270 1568,1500 1350,1500',15,24,30],['a','640,980 830,1010 780,1120 650,1080',0,26,26],
['b','0,260 200,190 360,250 340,430 130,380 0,460',-30,28,24],['b','560,330 770,330 780,430 790,520 690,620 590,520',8,30,30],['b','660,560 770,560 770,830 640,800',5,30,34],['b','430,740 550,740 630,810 620,880 430,840',8,30,44],['b','800,650 1030,640 1000,860 790,840',8,34,26],['b','550,20 780,20 700,100 560,110',20,44,30],['b','1080,20 1370,20 1370,200 1120,380 1090,200',6,26,34],['b','1130,350 1400,350 1370,470 1130,380',6,26,26],['b','430,860 620,890 600,1120 420,1090',8,18,30],['b','640,900 970,890 1000,1070 860,1120 640,980',8,18,26],['b','250,800 420,840 390,1050 240,960',15,26,30],['b','0,760 160,760 100,1000 0,980',30,26,20],['b','60,1060 210,1060 190,1200 60,1180',15,13,13],['b','380,1120 600,1140 570,1330 370,1290',8,44,14],['b','640,1160 890,1130 890,1310 800,1290 650,1250',8,17,24],['b','0,1290 230,1300 230,1500 0,1500',5,24,28],['b','260,1370 410,1300 430,1500 250,1500',5,22,28],['b','470,1450 790,1260 860,1420 850,1500 460,1500',30,24,20],['b','900,1130 1050,1180 1060,1330 890,1400',15,32,26],['b','160,1070 420,1120 340,1260 180,1200',-30,18,18],
['c','330,580 420,600 620,650 590,700 440,700 540,830 640,920 620,990 480,960 320,830 160,780',-42,19,14],['c','90,780 150,760 300,830 480,900 490,960 370,1000 240,960 100,870',8,26,17],['c','150,860 290,880 270,1150 100,1080',8,20,20],['c','270,1010 380,1060 370,1160 290,1180',20,16,26],['c','0,960 120,870 100,1100 0,1100',10,26,22],['c','0,1100 100,1150 220,1260 240,1340 80,1480 0,1480',5,20,15],['c','120,50 330,0 250,50 140,90',-20,30,26],['c','430,100 530,60 520,230 440,190',12,24,24],['c','770,0 960,0 970,130 900,190 840,190',10,28,28],['c','1050,230 1180,210 1150,330 1110,490 1090,480 1100,350 1040,300',8,18,18],['c','1050,70 1220,0 1260,140 1020,180',5,26,20],['c','1340,20 1568,0 1568,140 1460,120',8,24,28],['c','1370,360 1420,360 1540,560 1490,610 1390,470',35,20,15],['c','1020,1000 1110,1000 1090,1104 1050,1090',0,12,16],['c','1170,1020 1360,1060 1380,1104 1180,1104',8,22,18],['c','1070,1404 1530,1404 1530,1500 1060,1500',0,17,16],['c','700,1404 930,1404 930,1500 800,1500',-40,26,18],
['d','0,0 110,0 100,140 0,140',10,26,24],['d','110,160 190,170 180,360 140,370',8,14,34],['d','230,60 330,60 370,400 270,300',-8,20,26],['d','440,0 740,0 540,20 450,140',30,26,20],['d','700,0 880,0 1000,200 700,170',8,26,26],['d','0,1404 400,1404 390,1500 0,1500',0,20,16],['d','540,1300 700,1340 690,1500 540,1450',10,28,24],['d','950,1170 1030,1200 1080,1260 1010,1420 950,1300',10,32,46],
['e','0,100 240,100 270,300 260,540 0,600',14,16,26],['e','300,210 490,380 640,200 820,330 780,480 500,530 300,320',42,22,17],['e','400,20 620,80 620,200 480,400 330,260',-35,34,28],['e','270,470 450,430 510,520 400,550 260,590',30,24,20],['e','780,80 980,110 1060,480 860,480 780,300',-24,26,22],['e','1060,100 1300,60 1290,470 1100,430',8,21,20],['e','1300,80 1510,70 1500,380 1260,480',8,20,16],['e','830,520 1040,520 1020,700 820,640',5,18,16],['e','1060,620 1530,480 1500,830 1220,740 1180,640',6,17,26],['e','0,660 120,660 90,800 0,800',5,40,14],['e','140,650 430,660 480,880 340,1010 160,890',14,22,20],['e','0,830 140,830 130,970 60,1100 0,930',-35,30,24],['e','150,860 380,850 290,1090 120,1080',14,15,24],['e','460,900 640,860 640,940 430,1080 390,1010',-28,20,22],['e','1000,740 1220,760 1190,1030 960,1000',5,20,20],['e','1220,780 1490,830 1440,1170 1190,1010',5,24,24],['e','350,1130 520,1150 640,1250 640,1345 400,1345',5,17,24],['e','0,1120 300,1130 340,1345 0,1345',5,20,24],['e','560,1080 920,1040 980,1345 700,1345',5,30,26],['e','960,1050 1330,1080 1420,1345 1000,1345',8,28,26],['e','370,1050 480,1120 380,1170',5,14,18],
['f','0,180 250,230 340,420 0,400',-50,24,18],['f','150,400 340,380 430,540 450,700 320,560 230,520',10,22,20],['f','260,560 440,700 440,725 300,720',15,20,20],['f','340,560 450,430 600,560 650,650 460,700',40,20,18],['f','590,310 880,290 940,560 660,640',-12,30,34],['f','490,340 600,330 640,560 560,560',-12,30,34],['f','880,120 1070,110 1200,400 1240,600 1080,420 820,220',-38,24,24],['f','600,80 700,80 700,240 590,260',25,20,20],['f','1070,30 1270,50 1330,260 1500,520 1260,560 1100,260',-8,24,34],['f','880,680 1140,680 1140,760 890,760',3,40,18],['f','500,650 1060,650 1060,770 890,740 480,730',-12,20,16],['f','720,760 950,780 940,980 710,950',6,18,24],['f','780,960 1090,1010 1080,1190 970,1150 740,1100',6,18,34],['f','1010,820 1120,860 1090,1010 960,980',6,28,20],['f','1100,1020 1310,1050 1320,1245 1060,1245',6,22,24],['f','1130,650 1480,640 1310,720 1310,880 1120,840',-30,26,22],['f','920,420 1060,450 1080,580 950,540',6,24,30],['f','820,1260 1568,1260 1568,1345 820,1345',8,28,24],['f','0,440 70,470 60,600 0,560',5,14,20],['f','1510,600 1568,560 1568,1240 1510,1200',30,24,22]];

const MAIN={
a:['0,180 50,150 140,130','50,265 145,280 185,240 260,220 310,190 440,135','440,130 620,20','400,160 460,270 580,390 640,510 765,710 785,890','430,120 510,240 780,295 790,350 830,375 960,395 975,410','640,10 800,70 790,130 770,290','800,70 970,100 1150,135','970,100 955,200 975,300 975,520','1165,60 1345,60 1330,110 1270,150 1230,390','1165,60 1155,140 1120,290 1120,430 1160,540 1155,640 1135,760 1110,900','1100,370 1568,450','1310,420 1305,500 1355,580 1370,720 1320,780 1300,890','1250,255 1310,265 1350,235 1430,250 1450,275 1520,260 1568,300','470,410 530,520 635,710 720,655','510,490 605,430','760,710 780,690 850,695','60,520 75,610 80,810 135,930 190,1015 350,1010 440,1075 520,1085','50,870 135,930','650,1105 775,1140 810,1120 860,1130 950,1180 990,1130 1380,1190','915,960 1100,965','1100,890 840,885 835,840 915,750 930,770 1010,780 1010,1060','1100,900 1050,1110','1080,1100 1300,1100 1480,1120 1568,1150','1285,990 1260,1180 1210,1502','1420,980 1545,930','1510,1140 1525,1030','980,1502 1040,1460 1130,1440','1500,1230 1480,1270 1420,1290 1350,1450'],
b:['0,295 70,320 120,370 40,470 0,460','1185,10 1170,130 1310,160 1340,200','425,845 720,905 740,930','425,845 390,1100','635,815 980,880 1005,1070 1060,1160 1035,1270 1085,1320 1045,1325','635,815 610,1000 570,1310','690,990 770,1050 785,1220 795,1290','1000,1070 970,1110 910,1150','350,1290 450,1305 470,1335 540,1315 570,1330 785,1220','430,1105 660,1155','355,1150 320,1440','240,1225 250,1502','160,1290 235,1370 330,1350','120,1295 95,1450 110,1502','0,1160 180,1190 320,1110','50,1160 30,1250 15,1370','800,1255 890,1245'],
c:['80,110 130,70 250,40 350,0','960,0 1010,180 1140,245 1240,265 1305,300 1330,460 1350,570','1140,245 1180,170 1250,130','1350,70 1400,80 1440,130 1440,200 1370,290 1370,370','1340,20 1330,190 1420,240','1400,80 1500,160 1568,140','150,840 195,808 310,830 290,950 265,1050 280,1220 230,1265','150,840 130,1000 80,1120','0,1210 50,1170','160,1460 210,1502','800,1502 900,1404','1060,1020 1090,1104'],
d:['0,140 90,150 140,40 245,5','110,0 110,70 150,60','240,0 220,100','890,130 1000,150 1015,210','545,1502 555,1360 590,1350 635,1355 600,1440 595,1502','960,1502 1040,1405 1160,1480','1568,700 1530,710 1525,760 1568,850','1440,1500 1568,1390','210,1404 205,1502'],
e:['0,340 60,370 230,440 260,540','250,560 440,420 590,340 660,290 620,220 640,170 700,130 790,10','190,0 220,50 260,180 300,310 380,340 450,420 510,520','690,140 800,300 840,290 970,215 1090,200 1100,110 1060,80','590,330 770,500','780,90 940,500','940,100 1050,490','840,507 1040,500 1110,460 1140,410','1110,460 1040,600 1030,730 960,890 930,1030 985,1170 1040,1345','1090,30 1170,15 1568,100','1190,90 1170,180','1270,190 1265,300 1240,450 1225,640 1180,1190','1090,210 1270,250','1270,310 1360,190 1480,330 1568,400','1460,60 1490,150','1250,400 1290,440','1240,470 1340,530 1470,545 1530,600','1360,0 1350,190','790,650 830,660','1060,710 1230,740 1340,800 1490,830','370,610 440,700 480,880','0,820 100,800 360,780 420,805 630,800','120,650 120,720 90,800','150,830 130,960 50,1130','650,885 880,790 940,700','870,790 1000,800','1010,740 1000,830 950,980 960,1020','0,930 60,940 190,1030','380,1020 450,1110 520,1155 680,1185 850,1345','570,1130 680,1075 850,1065 960,1025 1180,1035','850,1280 1060,1220','1190,1010 1450,1060','1310,1180 1568,1215','1460,580 1440,830 1410,930','1330,1090 1140,1345','820,1100 690,1345','0,1340 50,1230 100,1150 140,1345','1430,1330 1470,1345','1510,840 1568,890'],
f:['0,100 100,130','210,165 350,175 450,190 520,260 590,280 620,290 730,250 810,205 870,120 890,40 960,10 1040,40','420,180 430,130 500,50 530,0','460,200 465,260 430,340 375,330 310,410 250,425 200,395 150,400 130,460','545,90 600,30 600,0','545,90 585,110 610,160 600,190 680,80 850,120','585,290 640,560 680,750','810,205 1010,410 1060,430 1130,530 1240,610 1230,660 1080,780','1090,280 1160,350 1240,450 1255,570 1390,610 1430,580 1410,530 1500,530','1270,40 1280,160 1320,200 1335,290','1470,510 1500,540','0,400 80,460 180,510','310,580 450,720 660,655 780,630','30,390 0,570','20,600 90,900 130,1230 170,1345','320,720 380,735 450,730 440,810 350,1000 290,1045 150,980 60,900 0,850','640,760 700,740 790,740 900,770 1050,770 1130,850 1290,885','1060,790 1190,700 1240,720 1300,670 1390,660 1440,620 1500,540 1568,460','1340,610 1320,800','1420,640 1480,700 1568,705','0,380 50,380 130,320 250,280','120,0 200,30 130,100','690,940 950,990','1110,1020 1310,1055','690,930 690,1030 735,1060 725,1190 815,1220 810,1250','1130,860 1080,1240','1010,1030 1030,1090','0,1215 140,1230','120,660 150,710 165,920','1310,1180 1350,1230 1568,1230','460,1200 600,1345']};
const HWY={
a:['362,5 352,180 368,260 310,365 240,450 250,500 310,570 340,650 370,680 435,700 470,740 560,860 625,985 685,1000 760,965 850,945 895,960 960,1060 1010,1140 1100,1300 1165,1502','285,400 320,465','1410,1220 1460,1190 1510,1200 1568,1240'],
b:['0,1215 60,1250 130,1280 170,1278 240,1235 300,1190 370,1135 430,1070 460,1025 500,995 550,978 690,985 760,925 775,890 775,830 780,740 755,625 790,500 810,475 780,435 860,300 868,240 845,120 855,5'],
c:['1165,0 1200,80 1250,150 1310,240','0,1080 90,1150 150,1215 215,1250 250,1290 265,1350','80,1502 265,1350 370,1310 420,1315 520,1350 620,1385 760,1450 800,1502','1345,220 1360,480 1370,560 1310,650','1180,1020 1390,1045','1165,1010 1120,1104','1400,1060 1400,1104','1080,1404 1060,1502','1550,1404 1530,1502'],
e:['800,0 860,105 940,110 1050,70 1060,20 1090,0','880,0 930,80','0,655 180,632 280,600 380,565 500,535 600,520 720,522 830,507 810,570 780,640 700,720 600,840 490,880 400,990 340,1050 310,1110 330,1200 375,1310 390,1350','0,1085 50,1115 100,1140 130,1125 300,1105','40,80 120,0','1530,610 1500,830 1450,1150']};
const M1={a:['310,455 420,490 545,530 640,535 720,515 790,485 840,475 900,480 950,530 990,600 1040,690 1090,780 1150,870 1220,930 1300,965 1370,1020 1400,1080 1412,1200 1370,1310 1325,1420 1310,1502'],c:['1315,0 1300,130 1305,220']};
const TUNNEL={a:['0,435 60,465 130,480 200,485 320,465 390,480'],c:['1310,210 1350,370 1388,490 1390,620 1400,960 1402,1060'],e:['1522,0 1495,370 1530,600','1450,1150 1410,1350','1495,830 1488,880']};
const RAIL={a:['405,10 415,130 450,230 560,370 640,410 760,540 780,640 785,800 850,1060 850,1130 820,1190 750,1230 740,1290 770,1350 830,1360 890,1420 900,1502'],c:['900,0 930,80 1000,170 1010,290 1040,360 1085,370','1060,160 1210,190 1310,280','1160,320 1210,300 1260,330 1290,400'],e:['0,920 90,950 220,1040','220,50 260,120 350,130','540,1345 520,1200 560,1110 620,1040','450,1060 560,1030','1090,80 1250,90 1370,60 1500,80'],f:['0,10 90,80','350,170 480,265']};
const YARD={e:['560,1110 640,1000 770,950','570,1100 660,1010 800,960','560,1030 700,960 860,900 960,800 1040,700','600,1010 760,930 880,860','640,1010 780,900 900,860','1000,740 1100,600 1170,470','1020,720 1130,590 1200,450','1030,680 1090,570 1190,440','1050,650 1180,550 1230,450','760,880 860,870 900,880','1040,660 1150,540 1240,350','700,960 860,850 800,900'],f:['100,130 160,160 330,190','90,750 110,920 150,1240']};
const CREEK={a:['1170,235 1200,232 1245,205 1310,190 1378,155 1420,185','0,145 40,160'],e:['290,0 285,60 288,200'],f:['350,195 405,265','1310,40 1330,120 1400,200 1495,255'],d:['815,210 855,250']};

const PLACES=[
['a','Artarmon',407,374,688],['a','Naremburn',850,729,1184],['a','St Leonards',630,938,987],['a','Cammeray',1133,950,1458],['a','Crows Nest',964,1082,1311],['a','Northwood',94,1166,425],['a','Greenwich',329,1374,642],['a','Northbridge',1328,540,1683],['a','Neutral Bay',1388,1412,1733],['a','Castlecrag',1435,40,1755],
['a','Cove',-10,207,118],['a','th',0,287,38],['a','Cove',-10,604,116],['a','ille',0,1374,83],
['b','Clontarf',948,336,1188],['b','Balgowlah',1242,248,1550],['b','Heights',1285,326,1505],['b','Cremorne',136,1100,430],['b','Mosman',654,1205,916],
['c','North Sydney',948,152,1348],['c','olwich',0,237,206],['c','Birchgrove',222,702,541],['c','Balmain',225,962,468],['c','The Rocks',1113,1001,1415],['c','ozelle',0,1168,181],['c','Kirribilli',1408,551,1630],
['d','Cremorne',144,159,438],['d','Point',215,237,368],['d','Vau',1478,829,1570],
['e','Pyrmont',727,86,977],['e','Glebe',503,341,673],['e','Ultimo',793,443,986],['e','nnandale',-4,407,252],['e','Camperdown',148,611,548],['e','Surry Hills',1170,608,1471],['e','Redfern',1032,896,1263],['e','Newtown',188,1100,467],['e','Waterloo',1037,1202,1305],['e','more',-10,1218,112],['e','Darlinghurst',1424,266,1788],['e','Moore Park',1466,992,1813],['e','Erskineville',356,1376,655],
['f','Rose Bay',1301,155,1566],['f','Paddington',70,560,412],['f','Woollahra',578,623,877],['f','Bon',1216,851,1330],['f','ara',1508,1106,1566]];
/* Street names: a plain name is set straight between its ends, "bend" sets it word by word */
const STREETS=[
['a','Mowbray Rd','450,125 540,62 655,22','bend'],['a','Willoughby Rd','953,165 967,470'],['a','Alpha Rd','1138,308 1168,118'],['a','River Rd','510,1104 664,1118'],['a','Pacific Hwy','1010,1148 1060,1240 1105,1350 1137,1458','bend','#6b4400'],['a','Rd W','-60,765 38,875'],
['b','Middle Head Rd','790,1308 840,1358 915,1368 995,1374 1075,1400','bend'],
['c','Bank St','640,1408 775,1480'],
['d','New South Head Rd','1168,1490 1250,1525 1320,1535 1380,1512 1525,1440','bend'],
['e','Johnston St','133,292 212,45'],['e','Wattle St','788,142 862,320'],['e','George St','1130,408 1180,200'],['e','Albion St','1290,443 1452,495'],['e','Cleveland St','823,675 1053,718'],['e','Salisbury Rd','92,815 200,835 260,842 325,818','bend'],['e','Mitchell Rd','735,1288 856,1080'],['e','Bourke St','1345,1120 1385,1040 1420,925','bend'],
['f','Victoria Rd','1034,55 1045,220 1055,240 1098,285','bend'],['f','Bellevue Rd','848,255 915,335 1000,418','bend'],['f',"O'Sullivan Rd",'1322,285 1350,365 1400,440 1475,512','bend'],['f','Moore Park Rd','66,625 180,655 325,735','bend'],['f','Oxford St','464,745 570,792 635,785','bend'],['f','York Rd','700,935 732,775'],['f','Birrell St','944,1008 1103,1035'],['f','Bronte Rd','1015,1090 1105,1280'],['f','Old','1558,450 1572,378']];
function streetName([t,name,s,mode,ink]){
  const p=pts(t,s),L=[0];
  for(let i=1;i<p.length;i++)L.push(L[i-1]+Math.hypot(p[i][0]-p[i-1][0],p[i][1]-p[i-1][1]));
  const total=L[L.length-1];
  const at=d=>{let i=1;while(i<L.length-1&&L[i]<d)i++;const k=(d-L[i-1])/(L[i]-L[i-1]);return[p[i-1][0]+(p[i][0]-p[i-1][0])*k,p[i-1][1]+(p[i][1]-p[i-1][1])*k]};
  const words=mode?name.split(' '):[name],chars=name.length;
  let c=0,out='';
  for(const w of words){
    const a=at(total*c/chars),b=at(total*(c+w.length)/chars);c+=w.length+1;
    const len=Math.hypot(b[0]-a[0],b[1]-a[1]),deg=Math.atan2(b[1]-a[1],b[0]-a[0])*180/Math.PI;
    out+=`<text transform="translate(${a[0].toFixed(1)} ${a[1].toFixed(1)}) rotate(${deg.toFixed(1)})" textLength="${len.toFixed(1)}" lengthAdjust="spacingAndGlyphs" font-size="${ink?22:18}" fill="${ink||'#6f7a85'}"${ink?' stroke="#ffeea9"':''}>${w}</text>`;
  }
  return out;
}
const SHIELDS=[['a','A1',311,72,89],['a','M1',784,441,102],['a','M1',1362,1107,99],['b','A8',815,270,92],['b','A8',261,1146,92],['c','M1',1346,618,99],['c','A4',491,1329,89],['e','A4',2,9,89],['e','A36',648,669,118],['e','M1',1469,660,102]];
const STATIONS=[['a',737,1299],['c',912,47],['c',1343,384],['e',1202,36],['e',1283,177],['e',1184,432],['e',946,813],['e',570,1029],['e',543,1167],['f',115,90],['f',562,312],['f',917,786]];

let seed=7;const rnd=()=>(seed=(seed*16807)%2147483647)/2147483647;
function grid([t,s,ang,w,h],k){
  const p=pts(t,s),xs=p.map(q=>q[0]),ys=p.map(q=>q[1]);
  const cx=(Math.min(...xs)+Math.max(...xs))/2,cy=(Math.min(...ys)+Math.max(...ys))/2;
  const R=Math.hypot(Math.max(...xs)-cx,Math.max(...ys)-cy)+w,nx=Math.ceil(R/w),ny=Math.ceil(R/h);
  const a=ang*Math.PI/180,c=Math.cos(a),n=Math.sin(a),node={};
  for(let i=-nx;i<=nx;i++)for(let j=-ny;j<=ny;j++){
    const x=i*w+(rnd()-.5)*w*.2,y=j*h+(rnd()-.5)*h*.2;
    node[i+'_'+j]=(cx+x*c-y*n).toFixed(1)+' '+(cy+x*n+y*c).toFixed(1);
  }
  let d='';
  for(let i=-nx;i<nx;i++)for(let j=-ny;j<ny;j++){
    if(rnd()<.88)d+='M'+node[i+'_'+j]+'L'+node[i+'_'+(j+1)];
    if(rnd()<.55)d+='M'+node[i+'_'+j]+'L'+node[(i+1)+'_'+j];
  }
  return `<clipPath id="g${k}"><path d="${line(t,s)}Z"/></clipPath><path clip-path="url(#g${k})" d="${d}" stroke="#fff" stroke-width="2.2" fill="none"/><path d="${line(t,s)}Z" stroke="#fff" stroke-width="2.2" fill="none" stroke-linejoin="round"/>`;
}
const fill=(o,c)=>`<path d="${many(o,true)}" fill="${c}"/>`;
const stroke=(o,c,w)=>`<path d="${many(o)}" fill="none" stroke="${c}" stroke-width="${w}" stroke-linejoin="round"/>`;
const mapSvg=()=>`<svg width="1190" height="1446" viewBox="1690 354 1190 1446">
<rect x="1690" y="354" width="1190" height="1446" fill="#e8e8e8"/>
${fill(SEA,'#aadaff')}${fill(LAND,'#e8e8e8')}${fill(CAMPUS,'#e1e5e9')}${fill(HOSP,'#fbe6e6')}${fill(SHOPS,'#fcf4dc')}
${GRIDS.map(grid).join('')}
${fill(PARK,'#c7e8c8')}${fill(LAWN,'#ccedca')}${fill(WATER,'#aadaff')}
${stroke(CREEK,'#aadaff',2)}${stroke(YARD,'#d5d6da',3)}${stroke(RAIL,'#d8d9de',3)}
${stroke(MAIN,'#dcdcdc',6)}${stroke(MAIN,'#fff',4.6)}
${stroke(HWY,'#f5cd63',11.500)}${stroke(M1,'#f5cd63',17)}${stroke(HWY,'#ffeea9',7.500)}${stroke(M1,'#ffe69a',11.500)}
${stroke(M1,'#f7d67a',1)}
${stroke(TUNNEL,'#cfcabd',11)}${stroke(TUNNEL,'#e4e0d9',8)}
<g font-family="Roboto,sans-serif" font-weight="400" stroke="#f1f1f1" stroke-width="5" stroke-linejoin="round" paint-order="stroke">
${STREETS.map(streetName).join('')}
</g>
${SHIELDS.map(([t,n,x,y,w])=>`<rect x="${X(t,x)}" y="${Y(t,y)}" width="${(w*.38265).toFixed(1)}" height="22" fill="#6a9f43"/><text x="${X(t,x+w/2)}" y="${Y(t,y)+17}" font-family="Roboto" font-weight="700" font-size="17.500" fill="#fff" text-anchor="middle">${n}</text>`).join('')}
${STATIONS.map(([t,x,y])=>`<circle cx="${X(t,x)}" cy="${Y(t,y)}" r="8.800" fill="#f5b400" stroke="#fff" stroke-width="1.400"/><text x="${X(t,x)}" y="${Y(t,y)+5}" font-family="Roboto" font-weight="700" font-size="14" fill="#fff" text-anchor="middle">T</text>`).join('')}
<g font-family="Roboto,sans-serif" font-size="25" fill="#50565f" stroke="#f1f1f1" stroke-width="5" stroke-linejoin="round" paint-order="stroke">
<text x="${X('c',1113)}" y="${Y('c',1404)}" font-size="39" font-weight="500" textLength="131">Sydney</text>
${PLACES.map(([t,n,a,y,b])=>`<text x="${X(t,a)}" y="${Y(t,y)}" textLength="${((b-a)*.38265).toFixed(1)}" lengthAdjust="spacingAndGlyphs">${n}</text>`).join('')}
</g></svg>`;
define('city-map',()=>`<style>:host{display:block;width:1190px;height:1446px}svg{display:block}</style>${mapSvg()}`);

define('map-pill',`<style>
:host{display:flex;box-sizing:border-box;position:absolute;width:552px;height:100px;border-radius:50px;background:#fff;color:#4a4a4a;font-size:28px;line-height:40px;padding:10px 0 0 32px;box-shadow:0 4px 14px rgba(0,0,0,.45)}
:host([dark]){background:#000;color:#fff;width:550px}
:host::after{content:"";position:absolute;top:100px;left:var(--tip);border:11px solid transparent;border-top-color:#fff;border-bottom:0}
:host([dark])::after{border-top-color:#000}
.t{width:432px;display:flex;flex-direction:column;align-items:flex-start}
::slotted([slot=title]){font-weight:600;color:#ff6850;font-size:27px}
:host([dark]) ::slotted([slot=title]){color:#fff}
</style><div class="t"><slot name="title"></slot><slot></slot></div><slot name="icon"></slot>`);
define('map-controls',`<style>
:host{display:flex;flex-direction:column;justify-content:space-between;height:1378px}
.b{width:80px;background:#fff;border-radius:4px;box-shadow:0 2px 8px rgba(0,0,0,.25)}svg{display:block}
</style><div class="b"><svg width="80" height="80" fill="none" stroke="#666" stroke-width="6"><path d="M25 36V25H36M44 25H55V36M55 44V55H44M36 55H25V44"/></svg></div>
<div class="b"><svg width="80" height="162"><path d="M36 22h8v14h14v8H44v14h-8V44H22v-8h14zM22 118h36v8H22z" fill="#666"/><path d="M10 80.500h60" stroke="#e6e6e6" stroke-width="2"/></svg></div>`);
define('map-view',`<style>
:host{display:block;position:relative;width:1190px;height:1446px;flex:none;overflow:hidden}
map-controls{position:absolute;left:1090px;top:20px}
.g{position:absolute;left:14px;top:1391px;font:500 37px/50px Inter,sans-serif;color:#fff;text-shadow:0 2px 5px rgba(0,0,0,.4),0 0 2px rgba(0,0,0,.35)}
.att{position:absolute;left:618px;right:0;bottom:0;height:28px;box-sizing:border-box;padding-left:10px;background:rgba(245,245,245,.75);display:flex;gap:23px;font:20px/27px Roboto,sans-serif;color:#444}
</style><city-map></city-map>
<map-pill style="left:226px;top:715px;--tip:265px"><fit-text slot="title" w="414">CEO Pitch A Tent Charity Event</fit-text><fit-text w="202">2 hrs (7:00 pm)</fit-text><time-icon slot="icon" kind="night" style="margin-top:8px"></time-icon></map-pill>
<map-pill dark style="left:218px;top:864px;--tip:264px"><fit-text slot="title" w="412">Martin Place Evening Outreach</fit-text><fit-text w="203">2 hrs (6:00 pm)</fit-text><time-icon slot="icon" kind="evening" style="margin:8px 0 0 -2px"></time-icon></map-pill>
<fit-text class="g" w="122">Google</fit-text>
<map-controls></map-controls>
<div class="att"><fit-text w="216">Map data ©2020 Google</fit-text><fit-text w="117">Terms of Use</fit-text><fit-text w="165">Report a map error</fit-text></div>`);

/* ---------- numbered callouts ---------- */
define('call-out',el=>{const[x,y,w,h,bx,by]=el.getAttribute('at').split(',').map(Number);return `<style>
:host{display:block;position:absolute;left:0;top:0;pointer-events:none}
.f{position:absolute;box-sizing:border-box;left:${x}px;top:${y}px;width:${w}px;height:${h}px;border:6px solid #e65555;border-radius:7px}
.n{position:absolute;left:${bx-24}px;top:${by-24}px;width:48px;height:48px;border-radius:50%;background:#e65555;color:#fff;font-size:23px;font-weight:500;line-height:48px;text-align:center}
</style>${w?'<div class="f"></div>':''}<div class="n"><slot></slot></div>`});

define('campfire-app',`<style>
:host{display:flex;position:relative;width:2880px;height:1800px;overflow:hidden}
main{display:flex;flex-direction:column;width:2378px}
.body{display:flex}
</style><side-bar></side-bar>
<main><top-header></top-header><tab-bar></tab-bar><filter-bar></filter-bar><div class="body"><activity-list></activity-list><map-view></map-view></div></main>
<call-out at="0,0,0,0,970,286">1</call-out>
<call-out at="1055,239,1326,96,2412,286">2</call-out>
<call-out at="525,481,1154,806,1600,484">3</call-out>
<call-out at="1703,411,1154,1360,2820,414">4</call-out>`);
</script>
</body>
</html>
